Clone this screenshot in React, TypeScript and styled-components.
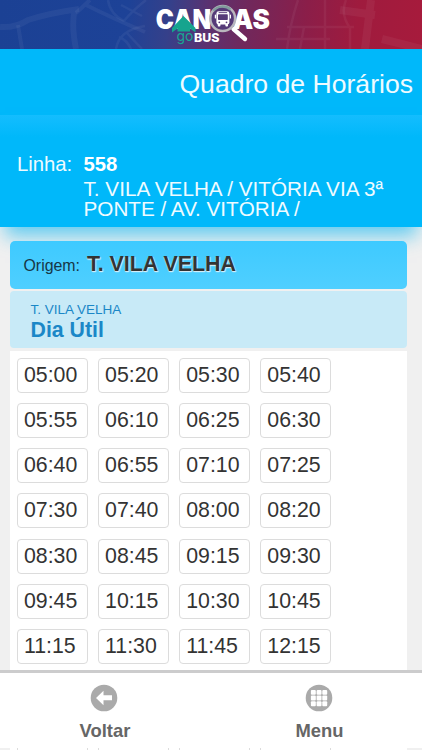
import React from 'react';
import styled, { createGlobalStyle } from 'styled-components';

const GlobalStyle = createGlobalStyle`
  * { box-sizing: border-box; }
  body {
    margin: 0;
    background: #f0f0f0;
    font-family: "Liberation Sans", Arial, sans-serif;
    overflow: hidden;
  }
`;

const Screen = styled.div`
  width: 422px;
  height: 750px;
  display: flex;
  flex-direction: column;
  overflow: hidden;
`;

const Banner = styled.header`
  flex: none;
  height: 49px;
  background: linear-gradient(97deg, #1b4194 0%, #1d4297 30%, #35408a 40%, #5b3270 49%, #70285c 58%, #8b1e49 72%, #9f1b3e 84%, #a71b3c 100%);
  svg { display: block; }
`;

const TitleBar = styled.div`
  flex: none;
  height: 66px;
  padding: 0 9px 0 0;
  display: flex;
  align-items: center;
  justify-content: flex-end;
  background: #00b8fa;
`;

const Title = styled.h1`
  margin: 0;
  padding-top: 4px;
  font-size: 26.6px;
  font-weight: 400;
  color: #effbff;
  white-space: nowrap;
`;

const LineInfo = styled.section`
  flex: none;
  height: 112px;
  padding: 38px 0 0 17px;
  display: grid;
  grid-template-columns: 66.5px 1fr;
  align-content: start;
  background: linear-gradient(#14bdfe, #00b8fa 22px);
  box-shadow: 0 14px 18px -5px rgba(0, 178, 240, 0.6);
  color: #effbff;
  font-size: 20.3px;
  line-height: 23px;
`;

const LineCode = styled.strong`
  color: #ffffff;
`;

const LineName = styled.div`
  grid-column: 2;
  padding-top: 3px;
  line-height: 20px;
  font-size: 20.7px;
  white-space: nowrap;
`;

const Content = styled.main`
  flex: 1;
  min-height: 0;
  padding: 13.5px 15px 0 10px;
  display: flex;
  flex-direction: column;
  overflow: hidden;
`;

const Origin = styled.div`
  flex: none;
  height: 48px;
  padding: 0 13.5px;
  display: flex;
  align-items: baseline;
  gap: 7px;
  line-height: 46px;
  border-radius: 5px;
  background: linear-gradient(#3ecaff, #4fcfff);
  font-size: 15.9px;
  color: #173746;
`;

const OriginName = styled.strong`
  font-size: 21.4px;
  color: #333333;
  text-shadow: 0 1px 1px #d4eef8, 1px 1px 1px #d4eef8;
`;

const DayCard = styled.div`
  flex: none;
  height: 57px;
  margin: 2.5px 0;
  padding: 11px 20.5px 0;
  border-radius: 4px;
  background: #c8eaf7;
  color: #1b87c7;
`;

const DayOrigin = styled.div`
  font-size: 13.5px;
  line-height: 16px;
`;

const DayName = styled.div`
  font-size: 21.3px;
  font-weight: 700;
  line-height: 24px;
`;

const Schedule = styled.div`
  flex: 1;
  min-height: 0;
  padding: 7px 7px 0;
  display: grid;
  grid-template-columns: repeat(4, 71px);
  grid-auto-rows: 35px;
  gap: 10.25px 10.1px;
  align-content: start;
  background: #ffffff;
  overflow: hidden;
`;

const Time = styled.div`
  height: 35px;
  padding-left: 6px;
  border: 1px solid #dcdcdc;
  border-radius: 4px;
  font-size: 21.3px;
  line-height: 32px;
  color: #333333;
  background: #ffffff;
`;

const Footer = styled.footer`
  flex: none;
  height: 78.5px;
  border-top: 3px solid #cccccd;
  display: grid;
  grid-template-columns: 208px 221px;
  background: #ffffff;
`;

const Action = styled.button`
  padding: 11.5px 0 0;
  border: 0;
  background: none;
  display: flex;
  flex-direction: column;
  align-items: center;
  gap: 8.5px;
  font: 700 18.4px/20px "Liberation Sans", Arial, sans-serif;
  color: #666666;
  & > svg { display: block; }
  & > span { margin-left: 2px; }
`;

const NextRows = styled.div`
  flex: none;
  height: 2px;
  padding: 0 7px;
  margin: 0 15px 0 10px;
  display: grid;
  grid-template-columns: repeat(4, 71px);
  column-gap: 10.1px;
  background: #ffffff;
`;

const RowSides = styled.div`
  border: solid #dcdcdc;
  border-width: 0 1px;
`;

const times = [
  '05:00', '05:20', '05:30', '05:40',
  '05:55', '06:10', '06:25', '06:30',
  '06:40', '06:55', '07:10', '07:25',
  '07:30', '07:40', '08:00', '08:20',
  '08:30', '08:45', '09:15', '09:30',
  '09:45', '10:15', '10:30', '10:45',
  '11:15', '11:30', '11:45', '12:15',
];

const BannerArt = () => (
  <svg width="422" height="49" viewBox="0 0 422 49">
    <g fill="none" stroke="#ffffff" strokeOpacity="0.05">
      <path strokeWidth="6" d="M0 27 Q16 28 28 20 Q50 13 79 9 M75 9 Q71 24 76 49" />
      <path strokeWidth="4" d="M18 25 L22 49 M76 13 L90 0 M84 4 Q112 18 145 32" />
      <path strokeWidth="2.5" d="M108 0 Q110 14 124 21 M124 21 Q132 11 146 0 M121 5 L142 16 M116 49 Q119 30 145 26 M126 32 L142 49 M131 49 Q127 40 119 37" />
      <path strokeWidth="2.5" d="M298 0 Q290 24 287 49 M287 27 H354 M276 39 H330 M325 0 V49 M346 0 Q340 14 350 28 V49 M304 27 L300 49" />
      <path strokeWidth="8" d="M371 0 L365 49 M340 10 L375 15 M382 39 L422 49" />
    </g>
    <g fill="#ffffff" fontFamily="Inter, sans-serif" fontWeight="900">
      <g fontSize="26.5">
        <text x="155.8" y="28.8" textLength="55.5" lengthAdjust="spacingAndGlyphs">CAN</text>
        <text x="232.5" y="28.8" textLength="37.5" lengthAdjust="spacingAndGlyphs">AS</text>
      </g>
      <text x="194" y="41.7" fontSize="11.5" fontWeight="800" textLength="25.5" lengthAdjust="spacingAndGlyphs">BUS</text>
    </g>
    <path d="M183.5 16 L195.5 28 V32.5 L190 28.5 V31.5 H177.5 V28.5 L172 32.5 V28 Z" fill="#16a48e" />
    <text x="176.5" y="41" fontSize="14.5" fontFamily="Inter, sans-serif" fontWeight="400" fill="#18a693" textLength="17" lengthAdjust="spacingAndGlyphs">go</text>
    <path d="M233.5 29 L245 39" stroke="#ffffff" strokeWidth="4.4" strokeLinecap="round" />
    <circle cx="222.7" cy="18.5" r="12.4" fill="#563a78" stroke="#b9b6bd" strokeWidth="2.5" />
    <path d="M213.4 10.7 A12.2 12.2 0 0 1 230.5 9.5" fill="none" stroke="#819c9d" strokeWidth="2.4" />
    <g fill="#ffffff">
      <rect x="216.4" y="11.3" width="13" height="13.2" rx="2.2" />
      <rect x="214.8" y="14.5" width="1.2" height="4" rx=".6" />
      <rect x="229.8" y="14.5" width="1.2" height="4" rx=".6" />
      <rect x="217.8" y="23.5" width="2.6" height="3" rx=".8" />
      <rect x="225.4" y="23.5" width="2.6" height="3" rx=".8" />
    </g>
    <g fill="#563a78">
      <rect x="218" y="14.2" width="9.8" height="5.8" rx=".7" />
      <rect x="218.7" y="12.2" width="8.4" height=".9" />
      <circle cx="219.3" cy="22.3" r=".9" />
      <circle cx="226.5" cy="22.3" r=".9" />
    </g>
  </svg>
);

const BackIcon = () => (
  <svg width="28" height="28" viewBox="0 0 28 28">
    <circle cx="14" cy="14" r="13.3" fill="#aaaaaa" />
    <path d="M6 14 L13.5 6.8 V11.2 H22 V16.3 H13.5 V21.2 Z" fill="#ffffff" />
  </svg>
);

const GridIcon = () => (
  <svg width="28" height="28" viewBox="0 0 28 28">
    <circle cx="14" cy="14" r="13.3" fill="#aaaaaa" />
    {[5.9, 11.6, 17.3].map((y) =>
      [5.9, 11.6, 17.3].map((x) => (
        <rect key={`${x}-${y}`} x={x} y={y} width="4.9" height="4.9" rx="1" fill="#ffffff" />
      )),
    )}
  </svg>
);

export default function App() {
  return (
    <Screen>
      <GlobalStyle />
      <Banner><BannerArt /></Banner>
      <TitleBar><Title>Quadro de Horários</Title></TitleBar>
      <LineInfo>
        <span>Linha:</span>
        <LineCode>558</LineCode>
        <LineName>T. VILA VELHA / VITÓRIA VIA 3ª<br />PONTE / AV. VITÓRIA /</LineName>
      </LineInfo>
      <Content>
        <Origin>Origem: <OriginName>T. VILA VELHA</OriginName></Origin>
        <DayCard>
          <DayOrigin>T. VILA VELHA</DayOrigin>
          <DayName>Dia Útil</DayName>
        </DayCard>
        <Schedule>{times.map((t) => <Time key={t}>{t}</Time>)}</Schedule>
      </Content>
      <Footer>
        <Action><BackIcon /><span>Voltar</span></Action>
        <Action><GridIcon /><span>Menu</span></Action>
      </Footer>
      <NextRows><RowSides /><RowSides /><RowSides /><RowSides /></NextRows>
    </Screen>
  );
}
